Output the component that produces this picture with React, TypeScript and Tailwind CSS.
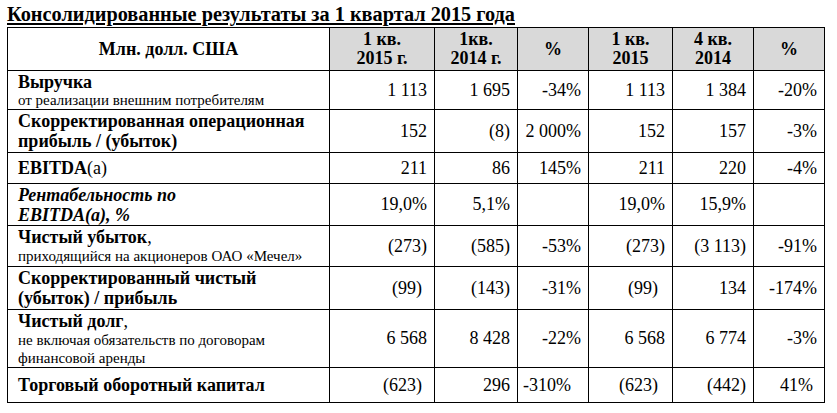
import type { ReactNode } from "react";

type Row = {
  label: ReactNode;
  values: string[];
  h: string;
  tweak?: Record<number, string>;
};

const rows: Row[] = [
  {
    label: (
      <>
        <div className="font-bold text-[18px] leading-[20px]">Выручка</div>
        <div className="text-[15px] leading-[17px]">от реализации внешним потребителям</div>
      </>
    ),
    values: ["1 113", "1 695", "-34%", "1 113", "1 384", "-20%"],
    h: "h-[39px]",
  },
  {
    label: (
      <div className="font-bold text-[18px] leading-[20px]">
        Скорректированная операционная
        <br />
        прибыль / (убыток)
      </div>
    ),
    values: ["152", "(8)", "2 000%", "152", "157", "-3%"],
    h: "h-[43px]",
  },
  {
    label: (
      <div className="text-[18px] leading-[20px]">
        <span className="font-bold">EBITDA</span>(a)
      </div>
    ),
    values: ["211", "86", "145%", "211", "220", "-4%"],
    h: "h-[31px]",
  },
  {
    label: (
      <div className="font-bold italic text-[18px] leading-[19.5px] pt-[2px]">
        Рентабельность по
        <br />
        EBITDA(a), %
      </div>
    ),
    values: ["19,0%", "5,1%", "", "19,0%", "15,9%", ""],
    h: "h-[42px]",
  },
  {
    label: (
      <>
        <div className="text-[18px] leading-[20px]">
          <span className="font-bold">Чистый убыток</span>,
        </div>
        <div className="text-[15px] leading-[18px]">приходящийся на акционеров ОАО «Мечел»</div>
      </>
    ),
    values: ["(273)", "(585)", "-53%", "(273)", "(3 113)", "-91%"],
    h: "h-[41px]",
  },
  {
    label: (
      <div className="font-bold text-[18px] leading-[20px]">
        Скорректированный чистый
        <br />
        (убыток) / прибыль
      </div>
    ),
    values: ["(99)", "(143)", "-31%", "(99)", "134", "-174%"],
    h: "h-[43px]",
    tweak: { 0: "pr-[12px]", 3: "pr-[14px]" },
  },
  {
    label: (
      <>
        <div className="text-[18px] leading-[20px]">
          <span className="font-bold">Чистый долг</span>,
        </div>
        <div className="text-[15px] leading-[18px]">
          не включая обязательств по договорам
          <br />
          финансовой аренды
        </div>
      </>
    ),
    values: ["6 568", "8 428", "-22%", "6 568", "6 774", "-3%"],
    h: "h-[58px]",
  },
  {
    label: <div className="font-bold text-[18px] leading-[20px]">Торговый оборотный капитал</div>,
    values: ["(623)", "296", "-310%", "(623)", "(442)", "41%"],
    h: "h-[35px]",
    tweak: { 0: "pr-[12px]", 2: "pr-[17px]", 3: "pr-[14px]", 5: "pr-[11px]" },
  },
];

const heads = [
  ["1 кв.", "2015 г."],
  ["1кв.", "2014 г."],
  ["%"],
  ["1 кв.", "2015"],
  ["4 кв.", "2014"],
  ["%"],
];

export default function App() {
  return (
    <div className="w-[837px] h-[413px] bg-white text-black font-['Liberation_Serif',serif] pl-[7px] pt-[3px]">
      <h1 className="text-[20.3px] font-bold underline decoration-2 underline-offset-[2px] leading-[22px] mb-[2px]">
        Консолидированные результаты за 1 квартал 2015 года
      </h1>
      <table className="table-fixed border-collapse w-[817px]">
        <colgroup>
          <col className="w-[322px]" />
          <col className="w-[105px]" />
          <col className="w-[83px]" />
          <col className="w-[71px]" />
          <col className="w-[84px]" />
          <col className="w-[81px]" />
          <col className="w-[71px]" />
        </colgroup>
        <thead>
          <tr className="h-[43px]">
            <th className="border border-black text-[18px] font-bold text-center">Млн. долл. США</th>
            {heads.map((h, i) => (
              <th
                key={i}
                className="border border-black bg-[#d9d9d9] text-[18px] font-bold text-center leading-[19px]"
              >
                {h.map((line, j) => (
                  <div key={j}>{line}</div>
                ))}
              </th>
            ))}
          </tr>
        </thead>
        <tbody>
          {rows.map((r, i) => (
            <tr key={i} className={r.h}>
              <td className="border border-black pl-[10px] pr-1 align-middle">{r.label}</td>
              {r.values.map((v, j) => (
                <td
                  key={j}
                  className={`border border-black text-right text-[18px] whitespace-nowrap align-middle ${
                    r.tweak?.[j] ?? "pr-[7px]"
                  }`}
                >
                  {v}
                </td>
              ))}
            </tr>
          ))}
        </tbody>
      </table>
    </div>
  );
}
